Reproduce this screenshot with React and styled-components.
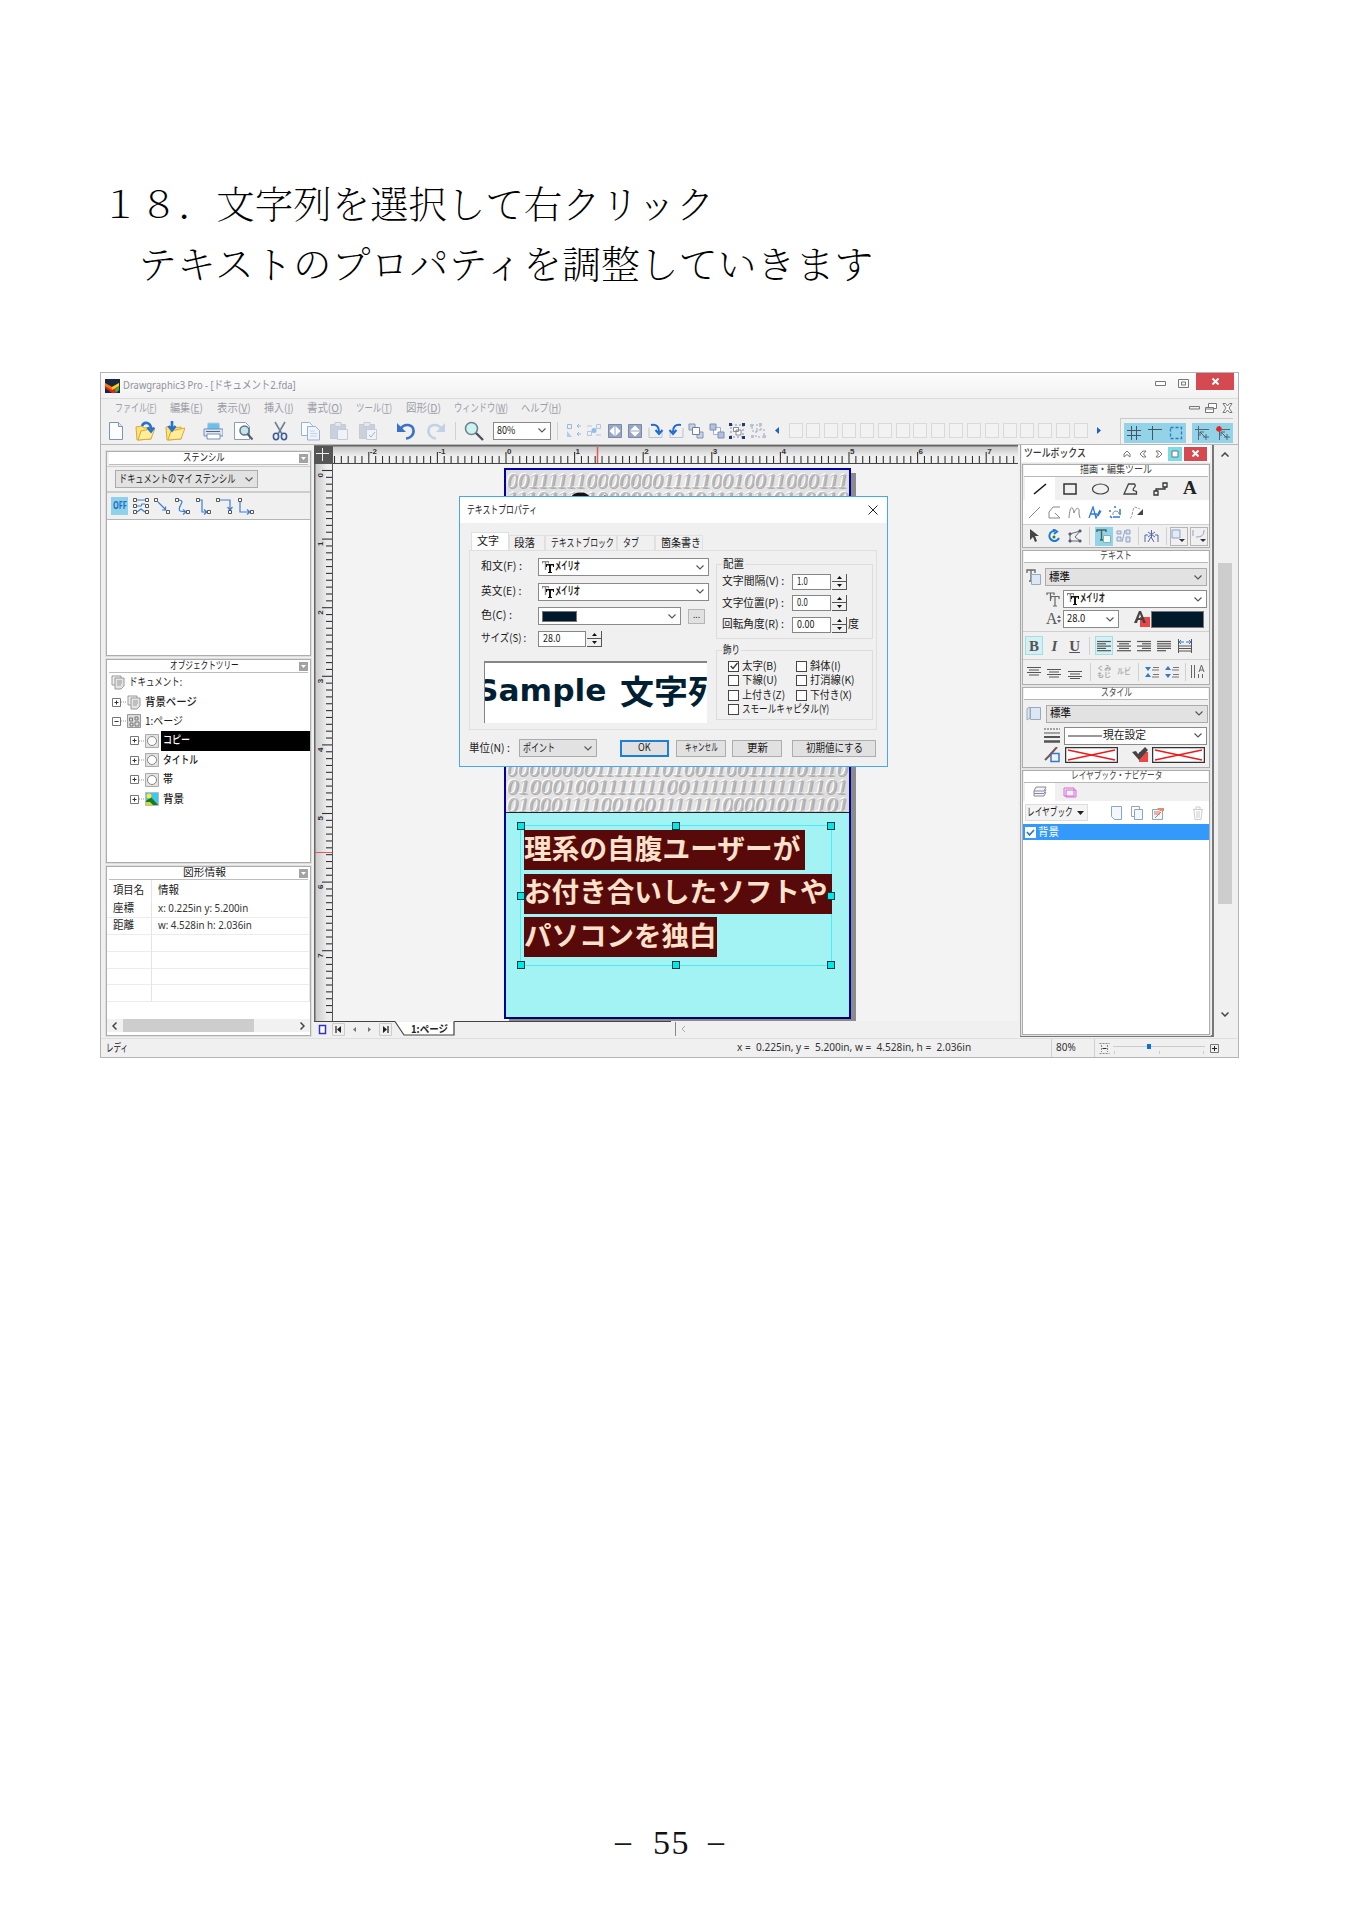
import React, { useLayoutEffect, useRef, useState } from "react";
import styled, { createGlobalStyle, css } from "styled-components";

const Global = createGlobalStyle`
  *{box-sizing:border-box}
  body{margin:0;background:#fff;font-family:"Noto Sans CJK JP","Noto Sans",sans-serif;color:#111}
  svg{display:block;flex:none}
`;

/* ---------- text fitted to a fixed measure ---------- */
const FitBox = styled.span`
  display:inline-block;flex:none;width:${p => p.$w}px;white-space:nowrap;line-height:${p => p.$size + 4}px;
  font-size:${p => p.$size}px;color:${p => p.$c || "#1a1a1a"};font-weight:${p => (p.$b === true ? 700 : p.$b || 400)};
  font-family:${p => p.$f || '"Noto Sans CJK JP",sans-serif'};margin-left:${p => p.$ml || 0}px;
`;
const FitInner = styled.span`display:inline-block;transform-origin:0 50%;white-space:pre;`;
function Fit({ w, size = 11, c, b, f, ml, children }) {
  const ref = useRef(null);
  const [s, setS] = useState(1);
  useLayoutEffect(() => {
    const n = ref.current.offsetWidth;
    if (n) setS(w / n);
  }, [w, children]);
  return (
    <FitBox $w={w} $size={size} $c={c} $b={b} $f={f} $ml={ml}>
      <FitInner ref={ref} style={{ transform: `translateY(${-Math.max(1.2, size * 0.06)}px) scaleX(${s})` }}>{children}</FitInner>
    </FitBox>
  );
}
const LATIN = '"Noto Sans",sans-serif';
const MINCHO = '"Noto Serif CJK JP","Noto Sans CJK JP",serif';

/* ---------- document page ---------- */
const Sheet = styled.main`width:1349px;height:1915px;background:#fff;padding:174px 0 0 100px;overflow:hidden;`;
const Heading = styled.div`height:60px;display:flex;align-items:center;padding-left:${p => p.$in}px;`;
const Footer = styled.footer`
  margin:765px 0 0 515px;height:40px;display:flex;align-items:center;gap:22px;
  font:34px/40px "Liberation Serif",serif;color:#111;
  b{font-weight:400;letter-spacing:1.5px;margin-right:-4px}
`;

/* ---------- window chrome ---------- */
const Win = styled.section`
  position:relative;width:1139px;height:686px;margin-top:78px;border:1px solid #b4b4b4;background:#f0f0f0;
  display:flex;flex-direction:column;
`;
const TitleBar = styled.div`
  height:25px;flex:none;display:flex;align-items:center;padding-left:4px;background:linear-gradient(#fdfdfd,#f2f2f2);
`;
const WinButtons = styled.div`margin-left:auto;height:25px;display:flex;align-items:flex-start;`;
const CloseBtn = styled.div`
  flex:none;width:${p => p.$w}px;height:${p => p.$h}px;background:#d44a50;display:flex;align-items:center;justify-content:center;
`;
const MenuBar = styled.div`
  height:19px;flex:none;border-top:1px solid #dcdcdc;display:flex;align-items:center;gap:13.3px;padding:0 5px 0 14px;
`;
const Right = styled.div`margin-left:auto;display:flex;align-items:center;gap:5px;`;
const ToolBar = styled.div`height:28px;flex:none;display:flex;align-items:center;padding-left:5px;border-bottom:1px solid #b8b8b8;`;
const Cell = styled.span`display:flex;flex:none;align-items:center;justify-content:center;width:${p => p.$w || 20}px;height:20px;margin-left:${p => p.$ml || 0}px;`;
const Sep = styled.span`flex:none;width:1px;height:${p => p.$h || 18}px;background:#d0d0d0;margin-left:${p => p.$ml || 0}px;`;
const Slots = styled.div`display:flex;gap:3.85px;margin-left:9px;`;
const EmptySlot = styled.span`width:14px;height:15px;border:1px solid #d9d9d9;background:#f2f2f2;`;
const Toggles = styled.div`
  display:flex;gap:6px;margin-left:18px;height:26px;border-top:1px solid #c8c8c8;border-left:1px solid #ccc;padding:4px 0 0 3px;
`;
const ToggleGroup = styled.div`display:flex;align-items:center;justify-content:space-around;width:${p => p.$w}px;height:20px;background:#92d3e8;`;

const Combo = styled.div`
  display:flex;flex:none;align-items:center;justify-content:space-between;width:${p => p.$w}px;height:${p => p.$h || 18}px;
  background:${p => p.$g ? "#e2e2e2" : "#fff"};border:1px solid ${p => p.$g ? "#ababab" : "#8a8a8a"};
  padding:0 4px 0 3px;margin-left:${p => p.$ml || 0}px;
`;
const Chevron = () => <svg width="8" height="5" viewBox="0 0 8 5"><path d="M.5.5 4 4 7.500.5" fill="none" stroke="#555" strokeWidth="1.1" /></svg>;

const Body = styled.div`height:593px;flex:none;display:flex;`;
const Left = styled.aside`width:213px;flex:none;padding:6px 0 0 5px;display:flex;flex-direction:column;gap:3px;`;
const Panel = styled.div`
  width:205px;height:${p => p.$h}px;border:1px solid #adadad;outline:1px solid #dedede;background:${p => p.$bg || "#fff"};display:flex;flex-direction:column;flex:none;
`;
const PanelHead = styled.div`
  height:13px;flex:none;display:flex;align-items:center;justify-content:center;background:#fff;
  margin:0 2px;border-bottom:1px solid #bdbdbd;
`;
const DropMark = styled.span`
  display:flex;width:9px;height:9px;background:#a3a3a3;align-items:center;justify-content:center;margin-left:auto;flex:none;
`;
const HeadText = styled.span`flex:1;display:flex;justify-content:center;`;
const StencilSelect = styled.div`height:27px;display:flex;align-items:center;padding-left:8px;border-bottom:2px solid #cdcdcd;border-top:1px solid #ccc;margin-top:1px;flex:none;`;
const ConnectorRow = styled.div`height:27px;flex:none;display:flex;align-items:center;padding-left:4px;gap:4px;border-bottom:1px solid #b5b5b5;`;
const Off = styled.span`width:17px;height:18px;background:#8fd0ea;display:flex;align-items:center;justify-content:center;`;
const White = styled.div`flex:1;background:#fff;min-height:0;`;
const TreeRow = styled.div`height:19.4px;flex:none;display:flex;align-items:center;padding-left:${p => p.$in}px;`;
const TreeLabel = styled.span`
  display:flex;align-items:center;margin-left:2px;padding-left:2px;height:19.6px;
  ${p => p.$on && css`background:#000;flex:1;`}
`;
const InfoTable = styled.div`display:grid;grid-template-columns:45px 1fr;flex:none;`;
const InfoCell = styled.div`
  height:${p => p.$h || 16.9}px;border-bottom:1px solid ${p => p.$h ? "#fff" : "#ececec"};border-right:1px solid #e4e4e4;
  display:flex;align-items:center;padding-left:6px;
`;
const HScroll = styled.div`height:13px;margin-top:auto;display:flex;align-items:center;background:#f1f1f1;flex:none;gap:6px;padding:0 5px;margin-bottom:3px;`;
const HThumb = styled.span`width:131px;height:13px;background:#cdcdcd;margin-right:auto;`;

const Center = styled.div`width:704px;flex:none;display:grid;grid-template:19px 557px 17px / 19px 685px;`;
const Corner = styled.div`background:#555;border-top:1px solid #777;padding:2px 0 0 2px;`;
const Canvas = styled.div`position:relative;background:#f3f3f3;overflow:hidden;`;
const Artboard = styled.div`
  position:absolute;left:171px;top:4px;width:347px;height:551px;border:2px solid #0000a0;border-bottom-color:#000070;
  box-shadow:5px 5px 0 #8b8b8b;background:#a4f3f4;
`;
const Texture = styled.div`
  height:343px;overflow:hidden;background:linear-gradient(100deg,#dedede,#e8e8e8 45%,#dcdcdc);border-bottom:1px solid #222;
  display:flex;flex-direction:column;justify-content:space-between;
`;
const Digits = styled.div`height:18px;padding-left:1px;white-space:nowrap;line-height:18px;`;
const DigitText = styled.span`text-shadow:-1px -1px 0 #fff,1px 1px 0 #aaa;font-style:italic;`;
const Selection = styled.div`position:absolute;left:14px;top:355px;width:312px;height:141px;border:1px solid #49eff0;padding:4px 0 0 3px;`;
const Marked = styled.div`width:${p => p.$w}px;height:40px;margin-bottom:3.6px;background:#570a09;display:flex;align-items:center;padding-bottom:1px;`;
const Handle = styled.i`
  position:absolute;left:${p => p.$x}px;top:${p => p.$y}px;width:8px;height:8px;margin:-4px;background:#00e8ea;border:1px solid #053a3a;
`;
const TitleInk = styled.svg`position:absolute;left:32px;top:20px;`;
const PageTabs = styled.div`grid-column:1 / 3;display:flex;align-items:center;background:#f0f0f0;`;

/* ---------- toolbox ---------- */
const Toolbox = styled.aside`
  width:194px;margin-left:2px;flex:none;background:#f0f0f0;border:solid #a5a5a5;border-width:0 2px 2px 1px;border-right-color:#777;border-bottom-color:#777;
  display:flex;flex-direction:column;height:592px;padding:0 2px 2px 1px;gap:2px;
`;
const BoxHead = styled.div`height:17px;flex:none;display:flex;align-items:center;background:#fff;padding-left:2px;gap:8px;`;
const PinBtn = styled.span`flex:none;margin-left:-3px;`;
const BoxClose = styled.span`flex:none;margin-left:-6px;`;
const Section = styled.div`height:${p => p.$h}px;flex:none;border:1px solid #adadad;display:flex;flex-direction:column;background:#f0f0f0;outline:1px solid #e4e4e4;`;
const SecHead = styled.div`height:12px;flex:none;background:#fff;border-bottom:1px solid #b8b8b8;margin:0 1px;display:flex;align-items:center;justify-content:center;`;
const Strip = styled.div`
  height:${p => p.$h}px;flex:none;display:flex;align-items:center;padding-left:${p => p.$pl || 0}px;background:${p => p.$bg || "transparent"};
  ${p => p.$line && css`border-top:1px solid #cfcfcf;`}
`;
const Tab = styled.span`height:100%;width:${p => p.$w || 30}px;display:flex;align-items:center;justify-content:center;background:${p => p.$on ? "#fff" : "transparent"};`;
const Tool = styled.span`
  flex:none;width:18px;height:19px;margin-left:${p => p.$ml ?? 2.3}px;display:flex;align-items:center;justify-content:center;
  background:${p => p.$on ? "#92d3e8" : p.$soft ? "#d3f1f4" : "transparent"};
  border:1px solid ${p => p.$soft ? "#a5dde3" : p.$box ? "#b5b5b5" : "transparent"};
`;
const Letter = styled.span`font:${p => p.$i ? "italic" : "normal"} bold 15px/16px "Liberation Serif",serif;color:#555;text-decoration:${p => p.$u ? "underline" : "none"};`;
const Swatch = styled.span`width:${p => p.$w}px;height:${p => p.$h}px;background:#001a2c;border:1px solid #777;flex:none;`;
const LayerBtn = styled.div`width:63px;height:17px;border:1px solid #ddd;background:#f4f4f4;display:flex;align-items:center;justify-content:space-between;padding:0 3px 0 1px;`;
const LayerRow = styled.div`height:16px;background:#3399fb;display:flex;align-items:center;gap:2px;padding-left:2px;flex:none;`;
const VScroll = styled.div`flex:1;display:flex;flex-direction:column;align-items:center;background:#f0f0f0;padding:7px 2px 21px 0;`;
const VThumb = styled.span`width:14px;height:341px;margin-top:106px;margin-bottom:auto;background:#cdcdcd;`;
const Kumi = styled.span`display:flex;flex-direction:column;span{line-height:7px}`;

const Status = styled.div`height:19px;flex:none;border-top:1px solid #dedede;display:flex;align-items:center;padding-left:5px;`;

/* ---------- dialog ---------- */
const Dialog = styled.div`
  position:absolute;left:358px;top:123px;width:429px;height:271px;border:1px solid #44a8ea;background:#f0f0f0;display:flex;flex-direction:column;
`;
const DlgTitle = styled.div`height:26px;background:#fff;display:flex;align-items:center;justify-content:space-between;padding:0 9px 0 7px;flex:none;`;
const Tabs = styled.div`height:27px;flex:none;display:flex;align-items:flex-end;padding:0 0 0 11px;`;
const DlgTab = styled.span`
  display:flex;align-items:center;padding-left:${p => p.$pl}px;width:${p => p.$w}px;height:${p => p.$on ? 18 : 15}px;
  background:${p => p.$on ? "#fff" : "transparent"};border:1px solid #e0e0e0;border-bottom:0;flex:none;
`;
const TabPage = styled.div`
  height:180px;flex:none;margin:0 10px 0 9px;border:1px solid #dfdfdf;display:flex;padding:7px 2px 0 11px;
`;
const Form = styled.div`width:235px;flex:none;display:flex;flex-direction:column;`;
const Field = styled.div`height:${p => p.$h}px;display:flex;align-items:center;flex:none;`;
const FieldLabel = styled.span`width:57px;flex:none;display:flex;padding-bottom:1px;`;
const Input = styled.span`
  width:${p => p.$w}px;height:16px;border:1px solid #868686;background:#fff;display:flex;align-items:center;padding-left:4px;flex:none;
`;
const SpinBox = styled.span`
  display:flex;flex-direction:column;width:15px;height:16px;margin-left:1px;flex:none;border:solid #555;border-width:0 1px 1px 0;background:#f0f0f0;
`;
const SpinHalf = styled.span`flex:1;display:flex;align-items:center;justify-content:center;border-bottom:${p => p.$t ? "1px solid #555" : 0};`;
const Ellipsis = styled.span`width:17px;height:15px;margin-left:7px;background:#e1e1e1;border:1px solid #b5b5b5;font:9px/9px "Noto Sans",sans-serif;text-align:center;`;
const Sample = styled.div`
  width:223px;height:62px;flex:none;margin:8px 0 0 3px;border:solid #858585;border-width:2px 0 0 1px;background:#fff;overflow:hidden;display:flex;align-items:center;padding-bottom:2px;
`;
const Groups = styled.div`display:flex;flex-direction:column;gap:5px;`;
const Group = styled.fieldset`
  width:157px;height:${p => p.$h}px;margin:0;min-width:0;padding:${p => p.$pt}px 0 0 ${p => p.$pl}px;border:1px solid #dcdcdc;
  legend{padding:0 1px;margin-left:${p => 5 - p.$pl}px;height:12px;line-height:0;display:flex;align-items:center}
`;
const Checks = styled.div`display:grid;grid-template-columns:68px 80px;grid-auto-rows:14.5px;align-items:center;`;
const CheckItem = styled.label`display:flex;align-items:center;gap:3px;${p => p.$wide && css`grid-column:1 / 3;`}`;
const Box = styled.span`width:11px;height:11px;border:1px solid #444;background:#fff;display:flex;align-items:center;justify-content:center;flex:none;`;
const DlgFoot = styled.div`flex:1;display:flex;align-items:center;padding:0 0 0 9px;`;
const Button = styled.span`
  width:${p => p.$w}px;height:17px;margin-left:${p => p.$ml}px;background:#e1e1e1;border:1px solid #adadad;display:flex;align-items:center;justify-content:center;flex:none;
  ${p => p.$d && css`border:2px solid #1a80d8;`}
`;

/* ---------- icons ---------- */
const S = ({ w = 20, h = 20, vb, children, c = "#666", sw = 1 }) => (
  <svg width={w} height={h} viewBox={vb || `0 0 ${w} ${h}`} fill="none" stroke={c} strokeWidth={sw}>{children}</svg>
);
const NewDoc = () => <S c="#7d93b8"><path d="M3.500 1.500h9l4 4v13h-13z" fill="#fbfdff" /><path d="M12.500 1.500v4h4" fill="#dfe9f5" /></S>;
const Folder = ({ down }) => (
  <S c="#d9aa33"><path d="M1 6l6-1 2 2 7-1v12l-14 1z" fill="#ffe27a" /><path d="M3 19 6 10l14-3-4 11z" fill="#ffed9c" />
    {down ? <path d="M7 0v8M3.500 5 7 9.500 10.500 5" stroke="#2472cf" strokeWidth="2.600" /> : <path d="M7 5c2-5 9-4 9 3M12.500 6.500 16 10.500 19 6.500" stroke="#2472cf" strokeWidth="2.600" />}
  </S>
);
const Printer = () => <S c="#7890b5"><path d="M5 2h11l1 7H4z" fill="#69c1ea" stroke="#b9cfe2" /><path d="M1 8h19v7H1z" fill="#dde5f0" /><path d="M4 13h13v5H4z" fill="#fff" /><path d="M3 10.500h14" stroke="#4a669a" /></S>;
const Preview = () => <S c="#8b9cb8"><path d="M1.500 1.500h11l4 4v13h-15z" fill="#fff" /><circle cx="11.500" cy="9.500" r="4.500" fill="#c4e6ea" stroke="#5d7488" strokeWidth="1.500" /><path d="M14.500 13l5 5.500" stroke="#4d5d70" strokeWidth="2" /></S>;
const Cut = () => <S c="#3c5c99" sw="1.600"><path d="M5 1l7 12M15 1 8 13" stroke="#6d8196" /><ellipse cx="6" cy="15.500" rx="2.600" ry="3.200" /><ellipse cx="14" cy="15.500" rx="2.600" ry="3.200" /></S>;
const Copy = () => <S c="#9fb0cc"><path d="M1.500 1.500h8l3 3v10h-11z" fill="#f8fbff" /><path d="M7.500 5.500h8l4 4v9.500h-12z" fill="#eef4fc" /><path d="M10 10h5M10 12.500h7M10 15h7" stroke="#c5d2e6" /></S>;
const Paste = ({ v }) => <S c="#c3cbd8"><path d="M1.500 3.500h15v14h-15z" fill="#cbd1dc" /><path d="M6 1.500h6v4H6z" fill="#e5e8ee" /><path d="M8.500 8.500h10v10h-10z" fill="#eff2f6" />{v && <path d="M11 14l2 2 4-5" stroke="#a9b3c4" />}</S>;
const Undo = ({ c = "#3a72c8", flip }) => <S c={c} sw="2.600"><g transform={flip ? "translate(20 0) scale(-1 1)" : undefined}><path d="M4.500 8C8 2 17 3 17.500 9.500 18 14 14 17.500 10 17.500" /><path d="M1 2v9h9z" fill={c} stroke="none" /></g></S>;
const Mag = () => <S c="#6c8294"><circle cx="7.500" cy="7.500" r="6" fill="#cdf3ee" strokeWidth="1.600" /><path d="M12 12l7 7" stroke="#47535f" strokeWidth="2.400" /></S>;

const ArrangeIcons = [
  <><path d="M1.500 1.500h4v4h-4zM11 3h4M11 11h4M13 1l-2 2 2 2M13 9l-2 2 2 2" stroke="#9ab8dc" /><path d="M1 14V8l5 6z" fill="#a9cdec" stroke="none" /></>,
  <><path d="M1.500 8.500h4v4h-4zM10.500 1.500h4v4h-4zM1 3h5M10 12h5" stroke="#b4c6de" /><circle cx="8" cy="7.500" r="2.500" fill="#8cc0ea" stroke="none" /></>,
  <><path d="M1.500 1.500h13v13h-13z" fill="#98a8c2" stroke="#7b8aa8" /><path d="M7.500 3v10L2.500 8zM8.500 3v10l5-5z" fill="#fff" stroke="none" /></>,
  <><path d="M1.500 1.500h13v13h-13z" fill="#98a8c2" stroke="#7b8aa8" /><path d="M3 7.500h10l-5-5zM3 8.500h10l-5 5z" fill="#fff" stroke="none" /></>,
  <><path d="M1 5v9.500h13V8" stroke="#b7c3d6" /><path d="M3 2c6-1 8 2 8 7M7.500 7l3.500 4 3.500-4" stroke="#1f6bd2" strokeWidth="2" /></>,
  <><path d="M15 5v9.500H2V8" stroke="#b7c3d6" /><path d="M13 2C7 1 5 4 5 9M1.500 7 5 11l3.500-4" stroke="#1f6bd2" strokeWidth="2" /></>,
  <><path d="M9 9h6v6H9zM1 1h6v6H1z" fill="#c6d2e8" stroke="#8494b4" /><path d="M4.500 4.500h7v7h-7z" fill="#fff" stroke="#6c7fa4" /></>,
  <><path d="M4.500 4.500h7v7h-7z" fill="#fff" stroke="#9fb0cc" /><path d="M9 9h6v6H9zM1 1h6v6H1z" fill="#b2c2de" stroke="#7f90b2" /></>,
  <><path d="M2 2h12v12H2z" strokeDasharray="2 2" stroke="#7f8fae" /><path d="M4.500 4.500h5v4h-5zM7 7h5v5H7z" stroke="#889" fill="#fff" /><path d="M0 0h3v3H0zM13 0h3v3h-3zM0 13h3v3H0zM13 13h3v3h-3z" fill="#203a78" stroke="none" /></>,
  <><path d="M2 2h8v6H2zM6 6h8v8H6z" strokeDasharray="2 2" stroke="#9aa5bd" /><path d="M0 1h3v3H0zM9 0h3v3H9zM1 12h3v3H1zM13 12h3v3h-3z" fill="#b9c3d5" stroke="none" /></>,
];
const TT = () => <S w={12} h={12} c="none"><path d="M0 0h7v2.500H6V1.200H4.200V9H2.800V1.200H1v1.300H0z" fill="#888" /><path d="M4 3h8v3h-1V4.500H9V11h1v1H6v-1h1V4.500H5V6H4z" fill="#111" /></S>;
const Pair = styled.span`display:flex;align-items:center;gap:1px;`;
const FontName = () => <Pair><TT /><Fit w={25} b size={11.5}>メイリオ</Fit></Pair>;
const Tick = ({ c = "#333" }) => <S w={8} h={8} c={c} sw="1.300"><path d="M.7 4 3 6.500 7.500 1" /></S>;
const X = ({ s = 8, c = "#fff", sw = 2 }) => <S w={s} h={s} c={c} sw={sw}><path d={`M.5.5 ${s - .5} ${s - .5}M${s - .5}.5.5 ${s - .5}`} /></S>;
const Tri = ({ up }) => <svg width="5" height="3"><path d={up ? "M0 3h5L2.500 0z" : "M0 0h5L2.500 3z"} fill="#111" /></svg>;
const Spinner = () => <SpinBox><SpinHalf $t><Tri up /></SpinHalf><SpinHalf><Tri /></SpinHalf></SpinBox>;
const Drop = () => <DropMark><svg width="5" height="3"><path d="M0 0h5L2.500 3z" fill="#fff" /></svg></DropMark>;

const connectors = [
  "M1.500 1.500h3v3h-3zM13.500 1.500h3v3h-3zM1.500 7.500h3v3h-3zM13.500 7.500h3v3h-3zM1.500 13.500h3v3h-3zM13.500 13.500h3v3h-3z|M5 3h8M5 9h4l1-2h3M5 15l4-3 4 3",
  "M1.500 1.500h3v3h-3zM13.500 13.500h3v3h-3z|M5 5l8 8M12.500 9.500v3.500H9",
  "M1.500 1.500h3v3h-3zM12.500 13.500h3v3h-3z|M5 3c8 1-3 7 1 11l6 1M9 12.500l3 2.500-3 2.500",
  "M1.500 1.500h3v3h-3zM12.500 13.500h3v3h-3z|M5 3h2v12h5M9 12.500l3 2.500-3 2.500",
  "M0.500 1.500h3v3h-3zM12.500 13.500h3v3h-3z|M4 3h10v10M11.500 10l2.500 3 2.500-3",
  "M1.500 1.500h3v3h-3zM13.500 13.500h3v3h-3z|M3 5v10h10M10 12.500l3 2.500-3 2.500",
];

const RES = 68.6;
function TopRuler() {
  const t = [];
  for (let i = -25; i <= 74; i++) {
    const x = 173 + (i * RES) / 10;
    t.push(<path key={i} d={`M${x} ${i % 10 ? 11 : 7}V18`} stroke="#333" strokeWidth="1.100" />);
    if (i % 10 === 0) t.push(<text key={"n" + i} x={x + 1} y="9" fontSize="8" fontWeight="bold" fontFamily="Liberation Sans" fill="#333">{i / 10}</text>);
  }
  return (
    <svg width="685" height="19">
      <defs><linearGradient id="rt" x2="0" y2="1"><stop stopColor="#bdbdbd" /><stop offset=".6" stopColor="#f0f0f0" /></linearGradient></defs>
      <rect width="685" height="19" fill="url(#rt)" /><path d="M0 .5h685" stroke="#666" strokeWidth="2" />{t}
      <path d="M264.500 2V18" stroke="#e05a5a" strokeWidth="1.500" /><path d="M0 18.500h685" stroke="#444" />
    </svg>
  );
}
function SideRuler() {
  const t = [];
  for (let i = 0; i <= 79; i++) {
    const y = 6.5 + (i * RES) / 10;
    t.push(<path key={i} d={`M${i % 10 ? 12 : 8} ${y}H18`} stroke="#333" strokeWidth="1.100" />);
    if (i % 10 === 0) t.push(<text key={"n" + i} transform={`translate(9 ${y + 7}) rotate(-90)`} fontSize="8" fontWeight="bold" fontFamily="Liberation Sans" fill="#333">{i / 10}</text>);
  }
  return (
    <svg width="19" height="557">
      <defs><linearGradient id="rs"><stop stopColor="#c6c6c6" /><stop offset=".7" stopColor="#ededed" /></linearGradient></defs>
      <rect width="19" height="557" fill="url(#rs)" /><path d="M.5 0v557" stroke="#666" strokeWidth="2" />{t}
      <path d="M1 388.500h17" stroke="#e05a5a" /><path d="M18.500 0v557" stroke="#555" />
    </svg>
  );
}

const lines = (a, c = "#555") => <S w={14} h={12} c={c} sw="1.200">{a.map(([x, w], i) => <path key={i} d={`M${x} ${1.5 + i * 2.3}h${w}`} />)}</S>;
const Plus = ({ minus }) => <S w={9} h={9} c="#777"><path d="M.5.5h8v8h-8z" fill="#fff" /><path d={minus ? "M2.500 4.500h4" : "M2.500 4.500h4M4.500 2.500v4"} stroke="#333" /></S>;
const PagesIcon = () => <S w={14} h={15} c="#999"><path d="M1 1h9v9H1z" fill="#eee" /><path d="M4 3h9v8l-3 3H4z" fill="#e4e4e4" /><path d="M6 6h5M6 8h5M6 10h4" /></S>;
const PageIcon = () => <S w={14} h={14} c="#999"><path d="M.5.5h13v13H.5z" fill="#ddd" /><path d="M2.500 4h3v3h-3zM8 3h3v3H8zM3 9h3v3H3zM8 8h4v4H8z" stroke="#777" /></S>;
const ShapeIcon = () => <S w={14} h={14} c="#aaa"><path d="M.5.5h13v13H.5z" fill="#e2e2e2" /><circle cx="7" cy="7" r="4.500" fill="#fff" stroke="#888" /></S>;
const PhotoIcon = () => <S w={14} h={14} c="#bbb"><path d="M.5.5h13v13H.5z" fill="#3fc7ee" /><path d="M1 13V9l5-4 7 8z" fill="#167a26" stroke="none" /><circle cx="4" cy="4" r="2.500" fill="#ffe838" stroke="none" /><path d="M1 13v-3h4l3 3z" fill="#d7d72c" stroke="none" /></S>;
const Dots = () => <S w={6} h={2} c="#999"><path d="M0 1h6" strokeDasharray="1 1" /></S>;

const menus = [["ファイル", "F", 42], ["編集", "E", 33], ["表示", "V", 34], ["挿入", "I", 30], ["書式", "O", 36], ["ツール", "T", 36], ["図形", "D", 35], ["ウィンドウ", "W", 54], ["ヘルプ", "H", 40]];
const topRows = ["001111110000000111110010011000111", "111011111000001101011111110110010"];
const bottomRows = ["000000001111111010011001111101110", "010001001111111001111111111111101", "010001111001001111111000010111101"];
const tree = [["copy", "コピー", 27, true], ["t", "タイトル", 35], ["o", "帯", 10], ["photo", "背景", 21]];
const NoFill = () => <S w={53} h={16} c="#333"><path d="M.5.5h52v15H.5z" fill="#fff" strokeWidth="1.500" /><path d="M3 3l47 10M50 3 3 13" stroke="#f01818" strokeWidth="1.500" /></S>;
const DigitRow = ({ r }) => <Digits><Fit w={341} size={20} c="#b9b9b9" f={'"Liberation Serif",serif'}><DigitText>{r}</DigitText></Fit></Digits>;

export default function App() {
  return (
    <>
      <Global />
      <Sheet>
        <Heading $in={1}><Fit w={613} size={38} b={200} c="#000" f={MINCHO}>１８．文字列を選択して右クリック</Fit></Heading>
        <Heading $in={38}><Fit w={735} size={38} b={200} c="#000" f={MINCHO}>テキストのプロパティを調整していきます</Fit></Heading>

        <Win>
          <TitleBar>
            <S w={15} h={14} c="none"><path d="M0 0h15v14H0z" fill="#16283f" /><path d="M0 4l7 4 7-4v6l-4 4H7L0 9z" fill="#e2231a" /><path d="M0 4l7 4v3L0 7z" fill="#ee7d1b" /><path d="M7 8l7-4v3l-7 4z" fill="#f7d51c" /><path d="M10 10l4-3v4l-3 3z" fill="#3fae3c" /></S>
            <Fit w={173} size={11.500} c="#8f929a" ml={3} f={'"Noto Sans","Noto Sans CJK JP",sans-serif'}>Drawgraphic3 Pro - [ドキュメント2.fda]</Fit>
            <WinButtons>
              <Cell $w={20}><S w={11} h={5} c="#777"><path d="M.5.5h10v4H.5z" fill="#fff" /></S></Cell>
              <Cell $w={26}><S w={11} h={9} c="#777"><path d="M.5.5h10v8H.500zM3.500 3h4v3h-4z" /></S></Cell>
              <CloseBtn $w={38} $h={17}><X s={7} /></CloseBtn><Cell $w={4} />
            </WinButtons>
          </TitleBar>
          <MenuBar>
            {menus.map(([t, k, w]) => <Fit key={k} w={w} size={11} c="#9a9da6">{t}(<u>{k}</u>)</Fit>)}
            <Right>
              <S w={11} h={4} c="#777"><path d="M.5.5h10v2.500H.500z" /></S>
              <S w={12} h={10} c="#777"><path d="M3.500 5V.5h8v5H8.500M.5 4.500h8v5h-8zM.5 6h8" fill="#fff" /></S>
              <S w={11} h={10} c="#777"><path d="M1 .5h2.500l2 2.500 2-2.500H10L7 5l3 4.500H7.500l-2-2.500-2 2.500H1L4 5z" fill="#fff" /></S>
            </Right>
          </MenuBar>
          <ToolBar>
            <Cell><NewDoc /></Cell><Cell $ml={9}><Folder /></Cell><Cell $ml={10}><Folder down /></Cell>
            <Cell $ml={18}><Printer /></Cell><Cell $ml={10}><Preview /></Cell><Cell $ml={17}><Cut /></Cell>
            <Cell $ml={10}><Copy /></Cell><Cell $ml={9}><Paste /></Cell><Cell $ml={9}><Paste v /></Cell>
            <Cell $ml={18}><Undo /></Cell><Cell $ml={10}><Undo c="#c3d1e4" flip /></Cell><Sep $ml={9} />
            <Cell $ml={8}><Mag /></Cell>
            <Combo $w={58} $ml={9} $h={18}><Fit w={18} size={10}>80%</Fit><Chevron /></Combo><Sep $ml={6} />
            {ArrangeIcons.map((ic, i) => <Cell key={i} $w={16} $ml={i ? 4.4 : 8}><S w={16} h={16}>{ic}</S></Cell>)}
            <Cell $w={6} $ml={8}><svg width="4" height="7"><path d="M4 0v7L0 3.500z" fill="#1c62c4" /></svg></Cell>
            <Slots>{Array.from({ length: 17 }, (_, i) => <EmptySlot key={i} />)}</Slots>
            <Cell $w={6} $ml={8}><svg width="4" height="7"><path d="M0 0v7l4-3.500z" fill="#1c62c4" /></svg></Cell>
            <Toggles>
              <ToggleGroup $w={62}>
                <S w={14} h={14} c="#456"><path d="M4.500 0v14M9.500 0v14M0 4.500h14M0 9.500h14" /></S>
                <S w={14} h={14} c="#456"><path d="M4.500 0v14M0 3.500h14" /></S>
                <S w={14} h={14} c="#2d77c5" sw="1.300"><path d="M1.500 1.500h11v11h-11z" strokeDasharray="3 2" /></S>
              </ToggleGroup>
              <ToggleGroup $w={41}>
                <S w={14} h={14} c="#567"><path d="M3.500 0v14M0 3.500h14M5 6l6 6M5 10V6h4M11 8v6M8 11h6" /></S>
                <S w={14} h={14} c="#567"><path d="M3.500 0v14M0 3.500h14M5 6l6 6M5 10V6h4M11 8v6M8 11h6" /><circle cx="3" cy="3" r="2.700" fill="#e22" stroke="none" /></S>
              </ToggleGroup>
            </Toggles>
          </ToolBar>

          <Body>
            <Left>
              <Panel $h={205} $bg="#f0f0f0">
                <PanelHead><HeadText><Fit w={42} size={10.500}>ステンシル</Fit></HeadText><Drop /></PanelHead>
                <StencilSelect><Combo $w={143} $g><Fit w={116} size={11}>ドキュメントのマイ ステンシル</Fit><Chevron /></Combo></StencilSelect>
                <ConnectorRow>
                  <Off><Fit w={14} size={10.500} b c="#1870c4" f={LATIN}>OFF</Fit></Off>
                  {connectors.map((d, i) => { const [a, b] = d.split("|"); return <S key={i} w={17} h={18}><path d={b} stroke="#3d7fd0" strokeWidth="1.200" /><path d={a} stroke="#555" fill="#fff" /></S>; })}
                </ConnectorRow>
                <White />
              </Panel>
              <Panel $h={204}>
                <PanelHead><HeadText><Fit w={69} size={10.500}>オブジェクトツリー</Fit></HeadText><Drop /></PanelHead>
                <TreeRow $in={4}><PagesIcon /><TreeLabel><Fit w={53}>ドキュメント:</Fit></TreeLabel></TreeRow>
                <TreeRow $in={5}><Plus /><Dots /><PagesIcon /><TreeLabel><Fit w={52} b={500}>背景ページ</Fit></TreeLabel></TreeRow>
                <TreeRow $in={5}><Plus minus /><Dots /><PageIcon /><TreeLabel><Fit w={38}>1:ページ</Fit></TreeLabel></TreeRow>
                {tree.map(([k, t, w, on]) => (
                  <TreeRow key={k} $in={23}><Plus /><Dots />{k === "photo" ? <PhotoIcon /> : <ShapeIcon />}
                    <TreeLabel $on={on}><Fit w={w} c={on ? "#fff" : "#1a1a1a"} b={500}>{t}</Fit></TreeLabel></TreeRow>
                ))}
              </Panel>
              <Panel $h={170}>
                <PanelHead><HeadText><Fit w={43} size={10.500}>図形情報</Fit></HeadText><Drop /></PanelHead>
                <InfoTable>
                  <InfoCell $h={21}><Fit w={31}>項目名</Fit></InfoCell><InfoCell $h={21}><Fit w={21}>情報</Fit></InfoCell>
                  <InfoCell><Fit w={21}>座標</Fit></InfoCell><InfoCell><Fit w={90} size={10} f={LATIN} c="#333">x: 0.225in y: 5.200in</Fit></InfoCell>
                  <InfoCell><Fit w={21}>距離</Fit></InfoCell><InfoCell><Fit w={94} size={10} f={LATIN} c="#333">w: 4.528in h: 2.036in</Fit></InfoCell>
                  {Array.from({ length: 8 }, (_, i) => <InfoCell key={i} />)}
                </InfoTable>
                <HScroll>
                  <S w={5} h={8} c="#444" sw="1.500"><path d="M4.500.5 1 4l3.500 3.500" /></S><HThumb /><S w={5} h={8} c="#444" sw="1.500"><path d="M.5.5 4 4 .5 7.500" /></S>
                </HScroll>
              </Panel>
            </Left>

            <Center>
              <Corner><S w={15} h={15} c="#eee"><path d="M6.500 0v13M0 5.500h13" /></S></Corner>
              <TopRuler />
              <SideRuler />
              <Canvas>
                <Artboard>
                  <Texture>
                    <div>{topRows.map(r => <DigitRow key={r} r={r} />)}</div>
                    <div>{bottomRows.map(r => <DigitRow key={r} r={r} />)}</div>
                  </Texture>
                  <TitleInk width="80" height="14" fill="none" stroke="#111"><path d="M34 9c3-6 14-6 17 0" strokeWidth="4" /><path d="M6 7h14M66 6l3 2" strokeWidth="2" /></TitleInk>
                  <Selection>
                    <Marked $w={281}><Fit w={276} size={27.500} b c="#ffe1cc">理系の自腹ユーザーが</Fit></Marked>
                    <Marked $w={308}><Fit w={304} size={27.500} b c="#ffe1cc">お付き合いしたソフトや</Fit></Marked>
                    <Marked $w={193}><Fit w={193} size={27.500} b c="#ffe1cc">パソコンを独白</Fit></Marked>
                    {[[0, 0], [155, 0], [310, 0], [0, 70], [310, 70], [0, 139], [155, 139], [310, 139]].map(([x, y]) => <Handle key={x + "-" + y} $x={x} $y={y} />)}
                  </Selection>
                </Artboard>
              </Canvas>
              <PageTabs>
                <svg width="704" height="17" fill="none" stroke="#444">
                  <path d="M0 .5h81M140 .5h217" strokeWidth="1.200" /><path d="M82 1l8 13h49V1z" fill="#fff" stroke="none" />
                  <path d="M81 .5l9 13.500h50V.5" strokeWidth="1.200" />
                  <path d="M5.500 4.500h6v8h-6z" stroke="#3030d8" strokeWidth="1.500" fill="#fff" />
                  <path d="M18.500 2.500h12v12h-12zM65.500 2.500h12v12h-12z" stroke="#ccc" />
                  <path d="M22 5v7M74 5v7" strokeWidth="1.500" /><path d="M27 5v7l-4-3.500zM69 5v7l4-3.500z" fill="#222" stroke="none" />
                  <path d="M42 6v5l-3-2.500zM54 6v5l3-2.500z" fill="#777" stroke="none" />
                  <path d="M361.500 1v14" stroke="#888" /><path d="M371 5l-3 3 3 3" stroke="#aaa" />
                  <text x="97" y="11.500" fontSize="10.500" textLength="37" lengthAdjust="spacingAndGlyphs" fontFamily="Noto Sans CJK JP" fontWeight="700" fill="#222" stroke="none">1:ページ</text>
                </svg>
              </PageTabs>
            </Center>

            <Toolbox>
              <BoxHead>
                <Fit w={62} size={11} b={500} c="#333">ツールボックス</Fit>
                <Cell $w={1} $ml={20} /><S w={8} h={8} c="#777"><path d="M1 4l3-3 3 3v3L4 4.500 1 7z" /></S>
                <S w={8} h={8} c="#777"><path d="M4 1 1 4l3 3h3L4.500 4 7 1z" /></S>
                <S w={8} h={8} c="#777"><path d="M4 1l3 3-3 3H1l2.500-3L1 1z" /></S>
                <PinBtn><S w={14} h={14} c="#fff"><path d="M0 0h14v14H0z" fill="#7ddbe4" stroke="none" /><path d="M4 4h6v6H4z" fill="#fff" stroke="#678" strokeWidth="1" /></S></PinBtn>
                <BoxClose><CloseBtn $w={23} $h={14}><X s={7} /></CloseBtn></BoxClose>
              </BoxHead>
              <Section $h={84}>
                <SecHead><Fit w={72} size={10.500} c="#444">描画・編集ツール</Fit></SecHead>
                <Strip $h={23} $pl={2}>
                  <Tab $on><S w={14} h={12} c="#111" sw="1.500"><path d="M1 11 13 1" /></S></Tab>
                  <Tab><S w={14} h={12} c="#333" sw="1.500"><path d="M1 1h12v10H1z" /></S></Tab>
                  <Tab><S w={17} h={12} c="#444" sw="1.200"><ellipse cx="8.500" cy="6" rx="8" ry="5" /></S></Tab>
                  <Tab><S w={15} h={13} c="#444" sw="1.300"><path d="M1 12 5.500 2h6c3 3-3 4-1 6.500l3 1V12z" /></S></Tab>
                  <Tab><S w={15} h={14} c="#333" sw="1.300"><path d="M1 9h4v4H1zM10 1h4v4h-4zM3 9V7h9V5" /></S></Tab>
                  <Tab><Fit w={14} size={19} b c="#222" f={'"Liberation Serif",serif'}>A</Fit></Tab>
                </Strip>
                <Strip $h={24} $bg="#fff" $pl={2}>
                  <Tool $ml={0}><S w={13} h={13} c="#888"><path d="M1 12 12 1" /></S></Tool>
                  <Tool><S w={13} h={13} c="#888"><path d="M12 1H5L1 6v6h11L7 7" /></S></Tool>
                  <Tool><S w={13} h={13} c="#888"><path d="M1 12C2-2 5 0 6 7 8 1 12 0 11 8l1 4" /></S></Tool>
                  <Tool><S w={14} h={13} c="#2f79d8" sw="1.300"><path d="M1 12 5 1l3 11 4-8M2 8h7M10 10l3-5" /></S></Tool>
                  <Tool><S w={14} h={13} c="#2f79d8"><path d="M1 5h2M6 1h2M12 3v6M5 11h7M4 12l-2-2" strokeWidth="1.500" /><path d="M5 9c-1-5 6-5 6-1" stroke="#888" /></S></Tool>
                  <Tool $ml={3}><S w={15} h={13} c="#999"><path d="M1 12C4 12 3 2 6 1l5 2" strokeDasharray="3 1" /><path d="M14 3v6H8z" fill="#444" stroke="none" /></S></Tool>
                </Strip>
                <Strip $h={23} $pl={2} $line>
                  <Tool $ml={0}><S w={10} h={14} c="none"><path d="M1 0v11l3-3 2 5 2-1-2-5h4z" fill="#444" /></S></Tool>
                  <Tool><S w={14} h={14} c="#2379d0" sw="2"><path d="M8 2a5 5 0 1 0 4 7M6 0l4 2.500L7 5" /><circle cx="7" cy="8" r="1.500" fill="#1a8a2a" stroke="none" /></S></Tool>
                  <Tool><S w={14} h={14} c="#667"><path d="M2 5l10-3-5 6 5 4H2z" /><path d="M1 4h2v2H1zM11 1h2v2h-2zM1 11h2v2H1zM11 11h2v2h-2z" fill="#358" /></S></Tool>
                  <Sep $ml={5} />
                  <Tool $on $ml={5}><S w={15} h={15} c="#466"><path d="M1 3V1h9v2M5.500 1v10M4 11h3" strokeWidth="1.400" /><path d="M7.500 6.500h7v7h-7z" fill="#f5fbff" stroke="#7ba" /></S></Tool>
                  <Tool><S w={15} h={14} c="#8fa3c4"><path d="M1 2h4v3H1zM1 8h4v4H1zM10 1h4v4h-4zM10 8h4v5h-4zM9 1 6 13" fill="#d8e2f0" /></S></Tool>
                  <Sep $ml={5} />
                  <Tool $ml={4}><S w={15} h={14} c="#56a"><path d="M1 13V6h3M14 13V6h-3M4 13l3-5 3 5M7.500 1v8M4 3l7 5M11 3 4 8" /></S></Tool>
                  <Sep $ml={5} />
                  <Tool $box $ml={3}><S w={15} h={14} c="#8fa3c4"><path d="M1 1h8v8H1z" fill="#e2eaf6" /><path d="M8 10h6l-3 3z" fill="#333" stroke="none" /></S></Tool>
                  <Tool $box><S w={15} h={14} c="#8fa3c4"><path d="M1 1v6M12 1c0 5-2 7-8 7" /><path d="M8 10h6l-3 3z" fill="#333" stroke="none" /></S></Tool>
                </Strip>
              </Section>

              <Section $h={135}>
                <SecHead><Fit w={32} size={10.500} c="#444">テキスト</Fit></SecHead>
                <Strip $h={28} $pl={3}><S w={16} h={16} c="#666"><path d="M1 4V1h8v3M5 1v11M3 12h4" strokeWidth="1.300" /><path d="M5.500 5.500h9v10h-9z" fill="#dce7f5" stroke="#9ab" /></S><Combo $w={162} $g $ml={3}><Fit w={21} b={500}>標準</Fit><Chevron /></Combo></Strip>
                <Strip $h={16} $pl={23}><S w={14} h={15} c="#666"><path d="M1 3V1h7v2M4.500 1v8M5 7V4.500h8V7M9 4.500V14M7 14h4" strokeWidth="1.200" /></S><Combo $w={144} $ml={3} $h={18}><FontName /><Chevron /></Combo></Strip>
                <Strip $h={24} $pl={23}>
                  <Fit w={11} size={17} c="#555" f={'"Liberation Serif",serif'}>A</Fit><S w={4} h={10} c="none"><path d="M0 4h4L2 1zM0 6h4L2 9z" fill="#666" /></S>
                  <Combo $w={56} $ml={2} $h={18}><Fit w={18} size={10.500}>28.0</Fit><Chevron /></Combo>
                  <Cell $w={18} $ml={14}><S w={16} h={16} c="none"><path d="M6 6h10v10H6z" fill="#ee4646" /><path d="M0 12 5 0h2l5 12H9L8 9H4l-1 3zM4.500 7h3L6 3z" fill="#444" /></S></Cell>
                  <Swatch $w={53} $h={17} />
                </Strip>
                <Strip $h={28} $pl={2} $line>
                  <Tool $soft $ml={0}><Letter>B</Letter></Tool><Tool><Letter $i>I</Letter></Tool><Tool><Letter $u>U</Letter></Tool><Sep $ml={5} />
                  <Tool $soft $ml={5}>{lines([[0, 14], [0, 9], [0, 14], [0, 9], [0, 14]])}</Tool>
                  <Tool>{lines([[0, 14], [2, 10], [0, 14], [2, 10], [0, 14]])}</Tool>
                  <Tool>{lines([[0, 14], [5, 9], [0, 14], [5, 9], [0, 14]])}</Tool>
                  <Tool>{lines([[0, 14], [0, 14], [0, 14], [0, 14], [0, 9]])}</Tool>
                  <Tool><S w={14} h={14} c="#555"><path d="M.5 0v14M13.500 0v14M1 7h12M1 9.500h12M1 12h12" /><path d="M1 3h5M3 1 1 3l2 2M13 3H8M11 1l2 2-2 2" stroke="#2f79d8" /></S></Tool>
                </Strip>
                <Strip $h={24} $pl={2} $line>
                  <Tool $ml={0}><S w={14} h={14} c="#555"><path d="M0 2.500h14M2 5h10M0 7.500h14M2 10h10" /></S></Tool>
                  <Tool><S w={14} h={14} c="#555"><path d="M0 4.500h14M2 7h10M0 9.500h14M2 12h10" /></S></Tool>
                  <Tool><S w={14} h={14} c="#555"><path d="M0 6.500h14M2 9h10M0 11.500h14M2 13.500h10" /></S></Tool><Sep $ml={6} />
                  <Tool $ml={4}><Kumi><Fit w={14} size={6} b c="#aaa">くみ</Fit><Fit w={14} size={6} b c="#aaa">もじ</Fit></Kumi></Tool>
                  <Tool><Fit w={14} size={8} b c="#b3b3b3">ルビ</Fit></Tool><Sep $ml={5} />
                  <Tool $ml={4}><S w={14} h={14} c="#777"><path d="M8 2.500h6M7 5h7M8 9.500h6M7 12h7" /><path d="M0 2h6L3 6zM0 12h6L3 8z" fill="#2f79d8" stroke="none" /></S></Tool>
                  <Tool><S w={14} h={14} c="#777"><path d="M8 2.500h6M7 5h7M8 9.500h6M7 12h7" /><path d="M0 5h6L3 1zM0 9h6l-3 4z" fill="#2f79d8" stroke="none" /></S></Tool><Sep $ml={4} />
                  <Tool $ml={2}><S w={15} h={15} c="#666"><path d="M1.500 1v13M4.500 1v13M9 8l2.500-7L14 8M10 6h3M8.500 10v4M12.500 10v4" /></S></Tool>
                </Strip>
              </Section>

              <Section $h={81}>
                <SecHead><Fit w={31} size={10.500} c="#444">スタイル</Fit></SecHead>
                <Strip $h={27} $pl={3}><S w={15} h={15} c="#9ab"><path d="M1 2.500 4 1v11l-3 2zM4.500 1.500h10v12h-10z" fill="#dce7f5" /></S><Combo $w={162} $g $ml={5}><Fit w={21} b={500}>標準</Fit><Chevron /></Combo></Strip>
                <Strip $h={17} $pl={21}><S w={16} h={15} c="#555"><path d="M0 1h16" strokeDasharray="2 1" /><path d="M0 5h16" /><path d="M0 9h16" strokeWidth="2" /><path d="M0 13.500h16" strokeWidth="2.500" /></S><Combo $w={143} $ml={4}><Pair><S w={34} h={2} c="#333"><path d="M0 1h34" strokeWidth="1.200" /></S><Fit w={43}>現在設定</Fit></Pair><Chevron /></Combo></Strip>
                <Strip $h={22} $pl={21}>
                  <S w={17} h={16} c="#2f79d8"><path d="M7 6.500h8v8H7z" strokeWidth="1.500" /><path d="M13 0 5 9l-4 4" stroke="#755" strokeWidth="2" /></S><Cell $w={53} $ml={4}><NoFill /></Cell>
                  <Cell $w={17} $ml={14}><S w={17} h={16} c="none"><path d="M7 5h9v10H7z" fill="#ee4646" /><path d="M0 5l4-1 2 3 7-7 3 3L7 13z" fill="#444" /></S></Cell><Cell $w={53} $ml={3}><NoFill /></Cell>
                </Strip>
              </Section>

              <Section $h={265}>
                <SecHead><Fit w={91} size={10.500} c="#444">レイヤブック・ナビゲータ</Fit></SecHead>
                <Strip $h={18} $pl={2}><Tab $on><S w={14} h={12} c="#889"><path d="M3 1h10l-2 4H1zM1 5v2.500h10l2-4M1 7.500V10h10l2-4" fill="#f4f6fa" /></S></Tab><Tab><S w={14} h={11} c="#d66ad8"><path d="M1 1h10v8H1zM3 3h10v7H3z" /></S></Tab></Strip>
                <Strip $h={23} $pl={2} $bg="#fff">
                  <LayerBtn><Fit w={46}>レイヤブック</Fit><svg width="7" height="4"><path d="M0 0h7L3.500 4z" fill="#222" /></svg></LayerBtn>
                  <Cell $w={14} $ml={21}><S w={12} h={14} c="#8fa3c4"><path d="M1.500.5h10v13h-7l-3-3z" fill="#f3f8ff" /></S></Cell>
                  <Cell $w={14} $ml={7}><S w={12} h={14} c="#8fa3c4"><path d="M.5.5h8v10h-8z" /><path d="M3.500 3.500h8v10h-8z" fill="#f3f8ff" /></S></Cell>
                  <Cell $w={14} $ml={7}><S w={13} h={14} c="#8fa3c4"><path d="M.5 3.500h10v10H.500z" fill="#f3f8ff" /><path d="M2 6h6M2 8h6M3 12l6-6" stroke="#e0704a" /><path d="M5 2h7v3H8z" fill="#e98b67" stroke="none" /></S></Cell>
                  <Cell $w={14} $ml={26}><S w={12} h={14} c="#ccc"><path d="M1 3.500h10M4 3V1h4v2M2 4l1 9.500h6L10 4M5 5v7M7 5v7" /></S></Cell>
                </Strip>
                <LayerRow><S w={11} h={11} c="#2873c8" sw="1.600"><path d="M0 0h11v11H0z" fill="#fff" stroke="none" /><path d="M2 5l2.500 3L9 3" /></S><Fit w={21} c="#fff" size={11}>背景</Fit></LayerRow>
                <White />
              </Section>
            </Toolbox>
            <VScroll>
              <S w={8} h={5} c="#444" sw="1.500"><path d="M.5 4.500 4 1l3.500 3.500" /></S><VThumb /><S w={8} h={5} c="#444" sw="1.500"><path d="M.5.5 4 4 7.500.5" /></S>
            </VScroll>
          </Body>

          <Status>
            <Fit w={22}>レディ</Fit>
            <Fit w={234} size={10.500} f={LATIN} ml={609} c="#333">x =  0.225in, y =  5.200in, w =  4.528in, h =  2.036in</Fit>
            <Sep $ml={80} /><Fit w={20} size={10} ml={4} f={LATIN} c="#333">80%</Fit><Sep $ml={18} />
            <Cell $w={12} $ml={3}><S w={11} h={11} c="#888"><path d="M.5.5h10M.5 10.500h10M2.500 2v7M8.500 2v7" strokeDasharray="2 1" /><path d="M3.500 5.500h4" stroke="#333" /></S></Cell>
            <Cell $w={92} $ml={3}><S w={92} h={12} c="#ccc"><path d="M0 4.500h92M1.500 9v3M46.500 9v3M90.500 9v3" /><path d="M34 2h4v5h-4z" fill="#0a72d4" stroke="none" /></S></Cell>
            <Cell $w={9} $ml={5}><S w={9} h={9} c="#777"><path d="M.5.5h8v8h-8z" /><path d="M2 4.500h5M4.500 2v5" stroke="#222" /></S></Cell>
          </Status>

          <Dialog>
            <DlgTitle><Fit w={70} size={11} c="#222">テキストプロパティ</Fit><X s={10} c="#222" sw={1} /></DlgTitle>
            <Tabs>
              <DlgTab $on $w={38} $pl={5}><Fit w={22}>文字</Fit></DlgTab><DlgTab $w={36} $pl={4}><Fit w={21}>段落</Fit></DlgTab>
              <DlgTab $w={72} $pl={5}><Fit w={63}>テキストブロック</Fit></DlgTab><DlgTab $w={38} $pl={5}><Fit w={16}>タブ</Fit></DlgTab>
              <DlgTab $w={48} $pl={5}><Fit w={40}>箇条書き</Fit></DlgTab>
            </Tabs>
            <TabPage>
              <Form>
                <Field $h={18}><FieldLabel><Fit w={41}>和文(F) :</Fit></FieldLabel><Combo $w={171}><FontName /><Chevron /></Combo></Field>
                <Field $h={31}><FieldLabel><Fit w={40}>英文(E) :</Fit></FieldLabel><Combo $w={171}><FontName /><Chevron /></Combo></Field>
                <Field $h={18}><FieldLabel><Fit w={31}>色(C) :</Fit></FieldLabel><Combo $w={143}><Swatch $w={35} $h={11} /><Chevron /></Combo><Ellipsis>...</Ellipsis></Field>
                <Field $h={28}><FieldLabel><Fit w={45}>サイズ(S) :</Fit></FieldLabel><Input $w={48}><Fit w={17} size={10.500}>28.0</Fit></Input><Spinner /></Field>
                <Sample><Fit w={130} size={31} b ml={-9} c="#001f33" f={'"DejaVu Sans",sans-serif'}>Sample</Fit><Fit w={102} size={33} b ml={14} c="#001f33">文字列</Fit></Sample>
              </Form>
              <Groups>
                <Group $h={81} $pl={5} $pt={1}>
                  <legend><Fit w={21}>配置</Fit></legend>
                  {[["文字間隔(V) :", "1.0", 11], ["文字位置(P) :", "0.0", 11], ["回転角度(R) :", "0.00", 17]].map(([l, v, w]) => (
                    <Field $h={21.500} key={l}><Fit w={62}>{l}</Fit><Cell $w={8} /><Input $w={39}><Fit w={w} size={10.500}>{v}</Fit></Input><Spinner />{w > 11 && <Fit w={11} ml={1}>度</Fit>}</Field>
                  ))}
                </Group>
                <Group $h={76} $pl={11} $pt={3}>
                  <legend><Fit w={17}>飾り</Fit></legend>
                  <Checks>
                    <CheckItem><Box><Tick /></Box><Fit w={35}>太字(B)</Fit></CheckItem><CheckItem><Box /><Fit w={31}>斜体(I)</Fit></CheckItem>
                    <CheckItem><Box /><Fit w={35}>下線(U)</Fit></CheckItem><CheckItem><Box /><Fit w={45}>打消線(K)</Fit></CheckItem>
                    <CheckItem><Box /><Fit w={43}>上付き(Z)</Fit></CheckItem><CheckItem><Box /><Fit w={42}>下付き(X)</Fit></CheckItem>
                    <CheckItem $wide><Box /><Fit w={87}>スモールキャピタル(Y)</Fit></CheckItem>
                  </Checks>
                </Group>
              </Groups>
            </TabPage>
            <DlgFoot>
              <Fit w={41}>単位(N) :</Fit><Combo $w={78} $g $ml={9}><Fit w={32}>ポイント</Fit><Chevron /></Combo>
              <Button $w={49} $ml={23} $d><Fit w={13} size={10.500}>OK</Fit></Button><Button $w={50} $ml={7}><Fit w={33} size={10.500}>キャンセル</Fit></Button>
              <Button $w={50} $ml={6}><Fit w={21}>更新</Fit></Button><Button $w={84} $ml={10}><Fit w={57}>初期値にする</Fit></Button>
            </DlgFoot>
          </Dialog>
        </Win>

        <Footer><Fit w={16} size={34} f={'"Liberation Serif",serif'}>–</Fit><b>55</b><Fit w={16} size={34} f={'"Liberation Serif",serif'}>–</Fit></Footer>
      </Sheet>
    </>
  );
}
